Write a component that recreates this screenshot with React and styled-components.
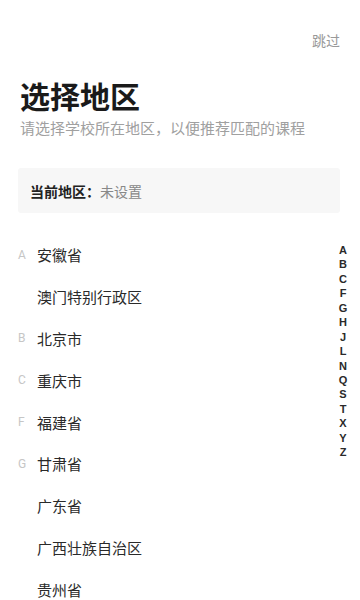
import React from 'react';
import styled, { createGlobalStyle } from 'styled-components';

const regions = [
    { letter: 'A', name: '安徽省' },
    { letter: '', name: '澳门特别行政区' },
    { letter: 'B', name: '北京市' },
    { letter: 'C', name: '重庆市' },
    { letter: 'F', name: '福建省' },
    { letter: 'G', name: '甘肃省' },
    { letter: '', name: '广东省' },
    { letter: '', name: '广西壮族自治区' },
    { letter: '', name: '贵州省' },
];

const indexLetters = ['A', 'B', 'C', 'F', 'G', 'H', 'J', 'L', 'N', 'Q', 'S', 'T', 'X', 'Y', 'Z'];

const App = () => {
    return (
        <Page>
            <GlobalStyle />
            <TopBar>
                <Skip>跳过</Skip>
            </TopBar>
            <Title>选择地区</Title>
            <Subtitle>请选择学校所在地区，以便推荐匹配的课程</Subtitle>
            <CurrentBox>
                <strong>当前地区：</strong>
                <span>未设置</span>
            </CurrentBox>
            <List>
                {regions.map((r, i) => (
                    <Row key={i}>
                        <Letter>{r.letter}</Letter>
                        <Name>{r.name}</Name>
                    </Row>
                ))}
            </List>
            <IndexBar>
                {indexLetters.map(l => (
                    <IndexItem key={l}>{l}</IndexItem>
                ))}
            </IndexBar>
        </Page>
    );
};

export default App;

const GlobalStyle = createGlobalStyle`
    html, body {
        margin: 0;
        padding: 0;
        background: #fff;
    }
    body {
        font-family: "Noto Sans CJK SC", "Noto Sans", sans-serif;
        color: #222;
    }
`;

const Page = styled.div`
    position: relative;
    width: 360px;
    height: 600px;
    overflow: hidden;
    box-sizing: border-box;
    padding: 30px 20px 0 18px;
`;

const TopBar = styled.div`
    display: flex;
    justify-content: flex-end;
`;

const Skip = styled.span`
    font-size: 14px;
    line-height: 20px;
    color: #999;
`;

const Title = styled.h1`
    margin: 25px 0 0 2px;
    font-size: 30px;
    line-height: 40px;
    font-weight: 700;
    color: #1a1a1a;
`;

const Subtitle = styled.p`
    margin: 3px 0 0 2px;
    font-size: 15px;
    line-height: 20px;
    color: #a0a0a0;
`;

const CurrentBox = styled.div`
    display: flex;
    align-items: center;
    margin-top: 30px;
    height: 45px;
    padding: 0 12px;
    background: #f7f7f7;
    border-radius: 3px;
    font-size: 14px;

    strong {
        font-weight: 700;
        color: #222;
    }
    span {
        color: #888;
    }
`;

const List = styled.div`
    margin-top: 21px;
    display: flex;
    flex-direction: column;
`;

const Row = styled.div`
    display: flex;
    align-items: center;
    height: 41.8px;
`;

const Letter = styled.span`
    width: 19px;
    font-family: "Roboto", "Liberation Sans", sans-serif;
    font-size: 12px;
    color: #c6c6c6;
`;

const Name = styled.span`
    font-size: 15px;
    color: #2a2a2a;
`;

const IndexBar = styled.div`
    position: absolute;
    right: 10px;
    top: 243px;
    width: 14px;
    display: flex;
    flex-direction: column;
    align-items: center;
`;

const IndexItem = styled.span`
    font-family: "Liberation Sans", Arial, sans-serif;
    font-size: 11px;
    font-weight: 600;
    line-height: 14.43px;
    color: #2a2a2a;
`;
